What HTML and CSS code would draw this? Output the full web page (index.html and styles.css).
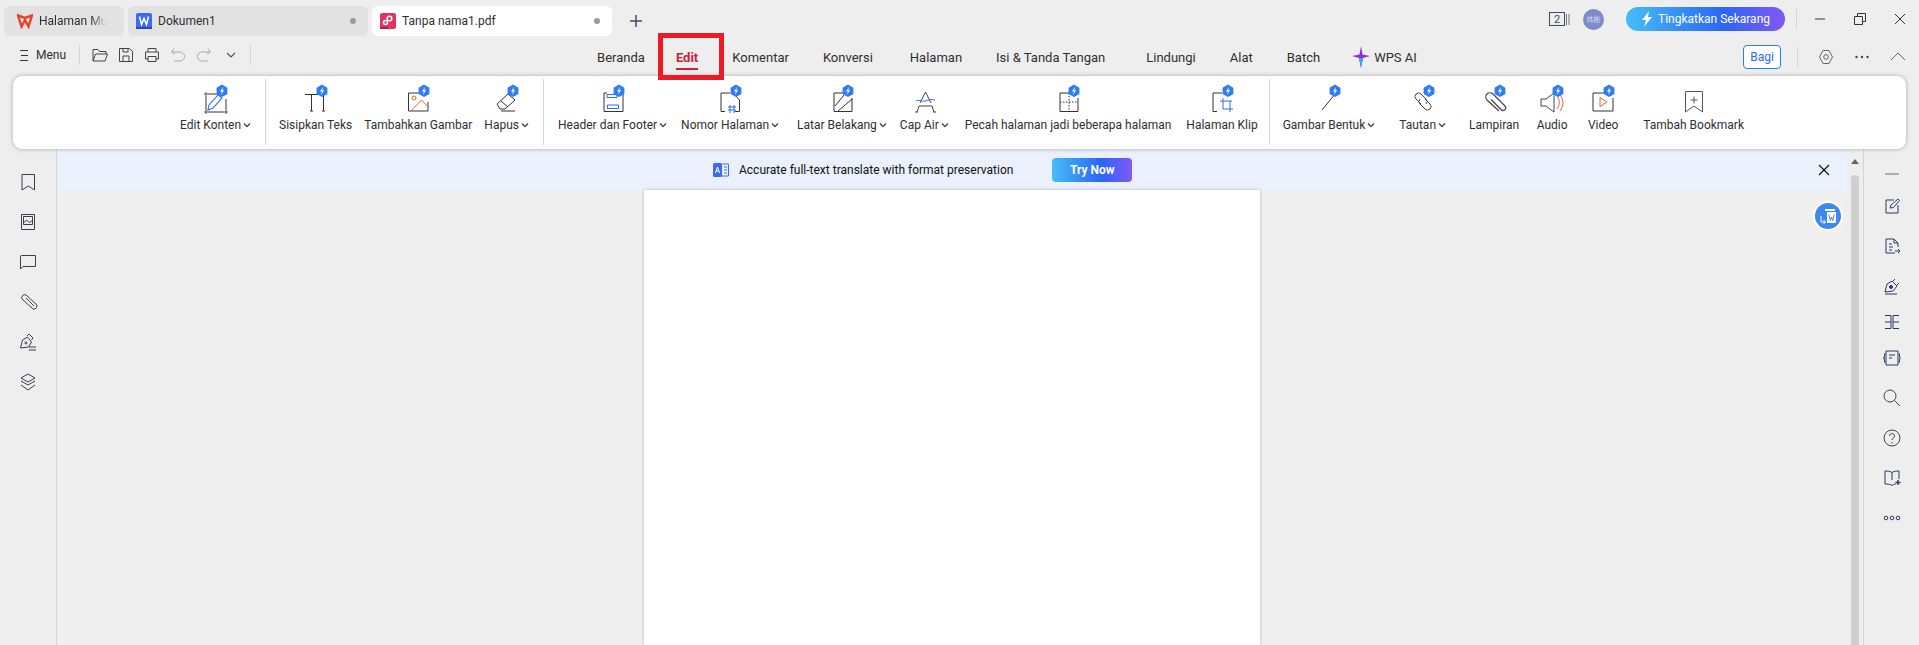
FILE: index.html
```html
<!DOCTYPE html>
<html lang="en">
<head>
    <meta charset="UTF-8">
    <meta name="viewport" content="width=device-width, initial-scale=1.0">
    <title>Tanpa nama1.pdf</title>
    <link rel="stylesheet" href="styles.css">
</head>
<body>
    <svg class="sprite" width="0" height="0">
        <symbol id="badge" viewBox="0 0 32 32">
            <path d="M22 .6l5.400 3.100v6.200L22 13l-5.400-3.100V3.700z" fill="#2f7bf6"/>
            <path d="M23.200 2.800l-3.200 4.600h2l-1.200 3.600 3.400-4.800h-2z" fill="#fff"/>
        </symbol>
        <symbol id="caret" viewBox="0 0 8 8">
            <path d="M1 2.500l3 3 3-3" fill="none" stroke="#444" stroke-width="1.300"/>
        </symbol>
    </svg>

    <!-- tabs row -->
    <div class="tabs-row">
        <div class="doc-tab">
            <svg class="tab-icon" viewBox="0 0 16 16"><path d="M1 2.500l3.500 11 3.500-6.500 3.500 6.500L15 2.500 8 5z" fill="none" stroke="#e8402a" stroke-width="2.400"/></svg>
            <span class="tab-name tab-name-fade">Halaman Mu</span>
        </div>
        <div class="doc-tab">
            <svg class="tab-icon" viewBox="0 0 16 16"><rect width="16" height="16" rx="2" fill="#3d6bf0"/><rect y="14" width="16" height="2" fill="#2a49b8"/><path d="M3.500 3.500l2 8 2.500-6 2.500 6 2-8" fill="none" stroke="#fff" stroke-width="1.500"/></svg>
            <span class="tab-name">Dokumen1</span>
            <span class="tab-dot"></span>
        </div>
        <div class="doc-tab doc-tab-active">
            <svg class="tab-icon" viewBox="0 0 16 16"><rect width="16" height="16" rx="2" fill="#e5345b"/><rect y="14" width="8" height="2" fill="#b31f42"/><circle cx="9.500" cy="5.500" r="2.300" fill="none" stroke="#fff" stroke-width="1.500"/><circle cx="5.500" cy="9.500" r="2" fill="none" stroke="#fff" stroke-width="1.500"/></svg>
            <span class="tab-name">Tanpa nama1.pdf</span>
            <span class="tab-dot"></span>
        </div>
        <svg class="new-tab" viewBox="0 0 12 12"><path d="M6 0v12M0 6h12" stroke="#3f4a66" stroke-width="1.500"/></svg>

        <div class="top-right">
            <svg class="count-icon" viewBox="0 0 21 14"><rect x=".5" y=".5" width="15" height="13" fill="none" stroke="#3f4a66"/><text x="8" y="11" class="count-num">2</text><path d="M17.500 2v11M20 2v11" stroke="#777"/></svg>
            <span class="avatar">炜彬</span>
            <button class="upgrade" type="button">
                <svg viewBox="0 0 12 16" width="12" height="16"><path d="M8 0L1 9h4l-2 7 8-10H7z" fill="#fff"/></svg>
                Tingkatkan Sekarang
            </button>
            <span class="vsep vsep-win"></span>
            <svg class="win-btn" viewBox="0 0 12 12"><path d="M1 6h10" stroke="#333"/></svg>
            <svg class="win-btn" viewBox="0 0 12 12"><path d="M.5 3.500h8v8h-8zM3.500 3.500v-3h8v8h-3" fill="none" stroke="#333"/></svg>
            <svg class="win-btn" viewBox="0 0 12 12"><path d="M1 1l10 10M11 1L1 11" stroke="#333"/></svg>
        </div>
    </div>

    <!-- menu and nav row -->
    <div class="menu-row">
        <div class="quick">
            <svg class="menu-lines" viewBox="0 0 9 11"><path d="M0 .5h8M1 5.500h7M0 10.500h8" stroke="#333"/></svg>
            <span class="menu-text">Menu</span>
            <span class="vsep"></span>
            <svg class="q-icon" viewBox="0 0 16 16"><path d="M1 14V2.500h5l1.500 2H14V7M1 14l2.500-7H15.500L13 14z" fill="none" stroke="#444"/></svg>
            <svg class="q-icon" viewBox="0 0 16 16"><path d="M1.500 1.500h10l3 3v10h-13zM5 14.500V9h6v5.500M5 1.500V5h5V1.500" fill="none" stroke="#444"/></svg>
            <svg class="q-icon" viewBox="0 0 16 16"><path d="M4 5V1.500h8V5M4 12H1.500V5h13v7H12M4 9.500h8v5H4z" fill="none" stroke="#444"/></svg>
            <svg class="q-icon q-off" viewBox="0 0 16 16"><path d="M4 1.500L1.500 5 5 7M2 5h8a4.500 4.500 0 0 1 0 9H4" fill="none" stroke="#aaa"/></svg>
            <svg class="q-icon q-off" viewBox="0 0 16 16"><path d="M12 1.500L14.500 5 11 7M14 5H6a4.500 4.500 0 0 0 0 9h6" fill="none" stroke="#aaa"/></svg>
            <svg class="q-more" viewBox="0 0 10 6"><path d="M1 1l4 4 4-4" fill="none" stroke="#555" stroke-width="1.200"/></svg>
            <span class="vsep"></span>
        </div>

        <nav class="nav-tabs">
            <span class="nav-tab nav-beranda">Beranda</span>
            <span class="nav-tab nav-tab-active">Edit<i class="mark-box"></i></span>
            <span class="nav-tab">Komentar</span>
            <span class="nav-tab">Konversi</span>
            <span class="nav-tab nav-halaman">Halaman</span>
            <span class="nav-tab nav-isi">Isi &amp; Tanda Tangan</span>
            <span class="nav-tab">Lindungi</span>
            <span class="nav-tab">Alat</span>
            <span class="nav-tab nav-batch">Batch</span>
            <span class="nav-tab nav-ai">
                <svg viewBox="0 0 18 24" width="18" height="24"><path d="M9 1l1.500 8.500L18 11l-7 2-2 10-2-10-7-2 7.500-1.500z" fill="#8a2be2"/><path d="M9 13l2 0-2 10-2-10z" fill="#33a6f5"/></svg>
                WPS AI
            </span>
        </nav>

        <div class="menu-right">
            <button class="share" type="button">Bagi</button>
            <span class="vsep"></span>
            <svg class="m-icon" viewBox="0 0 16 16"><path d="M5 1.500h6l3.500 6.500-3.500 6.500H5L1.500 8z" fill="none" stroke="#666"/><circle cx="8" cy="8" r="2.300" fill="none" stroke="#666"/></svg>
            <svg class="m-icon" viewBox="0 0 16 16"><circle cx="2.500" cy="8" r="1.200" fill="#444"/><circle cx="8" cy="8" r="1.200" fill="#444"/><circle cx="13.500" cy="8" r="1.200" fill="#444"/></svg>
            <svg class="m-icon" viewBox="0 0 16 16"><path d="M1 11l7-7 7 7" fill="none" stroke="#666"/></svg>
        </div>
    </div>

    <!-- ribbon -->
    <div class="ribbon">
        <div class="rb-item">
            <svg class="rb-icon" viewBox="0 0 32 32"><path d="M8 10h10M6 12v14M8 28h16M26 15v11" fill="none" stroke="#333"/><path d="M5 9h2v2H5zM5 27h2v2H5zM25 27h2v2h-2z" fill="none" stroke="#333" stroke-width=".8"/><path d="M8 26l1-5 9-10 4 3-9 10z" fill="none" stroke="#2f6cf0" stroke-width="1.100"/><use href="#badge"/></svg>
            <span class="rb-label">Edit Konten<svg class="caret"><use href="#caret"/></svg></span>
        </div>
        <span class="rb-sep"></span>
        <div class="rb-item rb-sisipkan">
            <svg class="rb-icon" viewBox="0 0 32 32"><path d="M5 10.500h21M11.500 10.500V27M23.500 10.500V27M10 27h3M22 27h3" fill="none" stroke="#333"/><use href="#badge"/></svg>
            <span class="rb-label">Sisipkan Teks</span>
        </div>
        <div class="rb-item rb-snug">
            <svg class="rb-icon" viewBox="0 0 32 32"><path d="M17 9H6.500v18H26V18" fill="none" stroke="#333"/><circle cx="12" cy="14" r="2" fill="none" stroke="#e2682a"/><path d="M9 27l10.500-11 6.500 7" fill="none" stroke="#e2682a"/><use href="#badge"/></svg>
            <span class="rb-label">Tambahkan Gambar</span>
        </div>
        <div class="rb-item">
            <svg class="rb-icon" viewBox="0 0 32 32"><path d="M6 20l11-10 7 6-10 9h-5zM10 17l7 6M10 27h14" fill="none" stroke="#333"/><use href="#badge"/></svg>
            <span class="rb-label">Hapus<svg class="caret"><use href="#caret"/></svg></span>
        </div>
        <span class="rb-sep"></span>
        <div class="rb-item rb-header">
            <svg class="rb-icon" viewBox="0 0 32 32"><path d="M22 9h4v18.500H7V9h3" fill="none" stroke="#333"/><path d="M10 10.500h10v3H10zM10.500 21h11v3.500h-11z" fill="none" stroke="#2f6cf0"/><use href="#badge"/></svg>
            <span class="rb-label">Header dan Footer<svg class="caret"><use href="#caret"/></svg></span>
        </div>
        <div class="rb-item rb-nomor">
            <svg class="rb-icon" viewBox="0 0 32 32"><path d="M16 9H7v18.500h4M21 27.500h4.500V16l-6-7" fill="none" stroke="#333"/><path d="M14 23h8M14 26h8M16 21v8M20 21v8" fill="none" stroke="#2f6cf0"/><use href="#badge"/></svg>
            <span class="rb-label">Nomor Halaman<svg class="caret"><use href="#caret"/></svg></span>
        </div>
        <div class="rb-item rb-latar">
            <svg class="rb-icon" viewBox="0 0 32 32"><path d="M18 9H8v18.500h18V14M9 22l9-11M12 27l14-12" fill="none" stroke="#333"/><use href="#badge"/></svg>
            <span class="rb-label">Latar Belakang<svg class="caret"><use href="#caret"/></svg></span>
        </div>
        <div class="rb-item">
            <svg class="rb-icon" viewBox="0 0 32 32"><path d="M17.500 8L12 19M17.500 8L23 19M9 28l2-6h13l2 6M10 28h-3M25 28h3" fill="none" stroke="#444"/><path d="M8 17c3-2 5 1 9 0s6-2 10-1" fill="none" stroke="#2f6cf0"/></svg>
            <span class="rb-label">Cap Air<svg class="caret"><use href="#caret"/></svg></span>
        </div>
        <div class="rb-item rb-pecah">
            <svg class="rb-icon" viewBox="0 0 32 32"><path d="M17 9H8v18.500h18V14" fill="none" stroke="#333"/><path d="M17 9v19M8 18h18" fill="none" stroke="#333" stroke-dasharray="1.500 1.500"/><use href="#badge"/></svg>
            <span class="rb-label">Pecah halaman jadi beberapa halaman</span>
        </div>
        <div class="rb-item rb-klip">
            <svg class="rb-icon" viewBox="0 0 32 32"><path d="M16 9H7v18.500h4" fill="none" stroke="#333"/><path d="M14 17h12M17 14v11h10M24 17v11" fill="none" stroke="#2f6cf0"/><use href="#badge"/></svg>
            <span class="rb-label">Halaman Klip</span>
        </div>
        <span class="rb-sep"></span>
        <div class="rb-item rb-bentuk">
            <svg class="rb-icon" viewBox="0 0 32 32"><path d="M9 26l13-16" stroke="#333"/><use href="#badge"/></svg>
            <span class="rb-label">Gambar Bentuk<svg class="caret"><use href="#caret"/></svg></span>
        </div>
        <div class="rb-item rb-tautan">
            <svg class="rb-icon" viewBox="0 0 32 32"><path d="M14 20l-5-5a3.500 3.500 0 0 1 5-5l5 5a3.500 3.500 0 0 1 0 5M18 15l5 5a3.500 3.500 0 0 1-5 5l-5-5a3.500 3.500 0 0 1 0-5" fill="none" stroke="#444"/><use href="#badge"/></svg>
            <span class="rb-label">Tautan<svg class="caret"><use href="#caret"/></svg></span>
        </div>
        <div class="rb-item rb-lampiran">
            <svg class="rb-icon" viewBox="0 0 32 32"><path d="M21 27L9 16a4 4 0 0 1 6-6l12 12a2.500 2.500 0 0 1-4 3.500l-10-10" fill="none" stroke="#444" stroke-width="1.200"/><use href="#badge"/></svg>
            <span class="rb-label">Lampiran</span>
        </div>
        <div class="rb-item">
            <svg class="rb-icon" viewBox="0 0 32 32"><path d="M5 15h5l8-6v19l-8-6H5z" fill="none" stroke="#444"/><path d="M21 12c3 4 3 9 0 13M24 11c4 5 4 11 0 16" fill="none" stroke="#e2682a"/><use href="#badge"/></svg>
            <span class="rb-label">Audio</span>
        </div>
        <div class="rb-item rb-video">
            <svg class="rb-icon" viewBox="0 0 32 32"><path d="M17 9H6v18h20V14" fill="none" stroke="#333"/><path d="M13 13.500l7 4.500-7 4.500z" fill="none" stroke="#e2682a"/><use href="#badge"/></svg>
            <span class="rb-label">Video</span>
        </div>
        <div class="rb-item rb-bookmark">
            <svg class="rb-icon" viewBox="0 0 32 32"><path d="M7.500 7.500h17V28l-8.500-6-8.500 6zM16 12.500v7M12.500 16h7" fill="none" stroke="#555"/></svg>
            <span class="rb-label">Tambah Bookmark</span>
        </div>
    </div>

    <!-- main area -->
    <div class="main">
        <aside class="rail">
            <svg class="rail-icon" viewBox="0 0 20 20"><path d="M4 2.500h12.500V18l-6.200-4L4 18z"/></svg>
            <svg class="rail-icon" viewBox="0 0 20 20"><path d="M3.500 2.500h13v15h-13z"/><path d="M5.500 4.500h9v8h-9zM5.500 11l3-3 3 2.500 3-2"/></svg>
            <svg class="rail-icon" viewBox="0 0 20 20"><path d="M2.500 4.500a1 1 0 0 1 1-1h14v11H5l-2.500 2.500z"/></svg>
            <svg class="rail-icon" viewBox="0 0 20 20"><path d="M15 17L4 7a3 3 0 0 1 4-4l10 9a3 3 0 0 1-3 5zM8 6l8 8"/></svg>
            <svg class="rail-icon" viewBox="0 0 20 20"><path d="M2.500 16l2-8 5-3 4 5-3 5zM9 4l2-2 4 4-1.500 2"/><circle cx="8" cy="11" r="1"/><path d="M11 15h7M11 18h7" stroke="#2b3a67"/></svg>
            <svg class="rail-icon" viewBox="0 0 20 20"><path d="M10 2l7 4-7 4-7-4zM3 9l7 4 7-4M3 13l7 5 7-5"/></svg>
        </aside>

        <div class="doc-area">
            <div class="banner">
                <svg class="banner-icon" viewBox="0 0 16 16"><rect x="0" y="1" width="9" height="14" rx="1.500" fill="#3d6bf0"/><path d="M2.500 11l2-6 2 6M3.300 9h2.400" fill="none" stroke="#fff"/><path d="M9 2h6.500v12H9M11 5h3M11 8h3M11 11h3" fill="none" stroke="#3d6bf0"/></svg>
                <span class="banner-text">Accurate full-text translate with format preservation</span>
                <button class="try-now" type="button">Try Now</button>
            </div>
            <svg class="banner-close" viewBox="0 0 12 12"><path d="M1 1l10 10M11 1L1 11" stroke="#111" stroke-width="1.200"/></svg>
            <span class="float-btn">
                <svg viewBox="0 0 18 18" width="18" height="18"><path d="M6 2h10v2H6z" fill="#fff"/><path d="M8 5h9v11H8z" fill="#fff"/><path d="M2 9v6h4M4.500 13l2 2-2 2" fill="none" stroke="#fff"/><path d="M9.800 7.500l1.500 6 1.200-3.500 1.200 3.500 1.500-6" fill="none" stroke="#3f86ee"/></svg>
            </span>
            <div class="page"></div>
        </div>

        <div class="scrollbar">
            <span class="scroll-up"></span>
            <span class="scroll-thumb"></span>
        </div>

        <aside class="rail-right">
            <svg class="rr-icon rr-first" viewBox="0 0 20 20"><path d="M3 10h14" stroke="#999" stroke-width="1.500"/></svg>
            <svg class="rr-icon rr-close" viewBox="0 0 20 20"><path d="M12 4H4v13h12V9M8 12l1-3 7-6 1.500 1.500-6 7z"/></svg>
            <svg class="rr-icon" viewBox="0 0 20 20"><path d="M12 3H4v14h9M12 3l4 4v4M12 3v4h4M7 8h3M7 11h4M7 14h3M13 15h5M16 13l2 2-2 2"/></svg>
            <svg class="rr-icon" viewBox="0 0 20 20"><path d="M3 16l2-8 5-3 5 5-4 5zM13 3l-2 2M17 7l-2 2M3 18h12"/><circle cx="9" cy="11" r="1.500" fill="#2b3a67"/></svg>
            <svg class="rr-icon rr-tight" viewBox="0 0 20 20"><path d="M3 3.500h6v13H3M3 10h6M17 3.500h-6v13h6M11 10h6"/></svg>
            <svg class="rr-icon rr-tight" viewBox="0 0 20 20"><path d="M4 3h12v14H4zM3 5l-1 5 1 5M17 5l1 5-1 5M7 7h6M7 10h3M1 10h1"/></svg>
            <svg class="rr-icon rr-plain" viewBox="0 0 20 20"><circle cx="8" cy="8" r="6"/><path d="M12.500 12.500L18 18"/></svg>
            <svg class="rr-icon rr-plain" viewBox="0 0 20 20"><circle cx="10" cy="10" r="8"/><path d="M7.500 8a2.500 2.500 0 1 1 3.500 2.300c-.8.400-1 1-1 1.700M10 14v1.500"/></svg>
            <svg class="rr-icon" viewBox="0 0 20 20"><path d="M10 4.500C8 3 5 3 3 3v13c2 0 5 0 7 1.500 2-1.500 3-1.500 4-1.500M10 4.500c2-1.500 5-1.500 7-1.500v8M10 4.500V12"/><path d="M16 12v5M13.500 14.500h5" stroke-width="1.500"/></svg>
            <svg class="rr-icon" viewBox="0 0 20 20"><circle cx="4" cy="10" r="1.800"/><circle cx="10" cy="10" r="1.800"/><circle cx="16" cy="10" r="1.800"/></svg>
        </aside>
    </div>
</body>
</html>
```

FILE: styles.css
```css
* {
    box-sizing: border-box;
}

html, body {
    height: 100%;
}

body {
    margin: 0;
    display: flex;
    flex-direction: column;
    overflow: hidden;
    background-color: #eeeeee;
    color: #2f2f2f;
    font-family: Roboto, "Noto Sans CJK SC", Arial, sans-serif;
    font-size: 12px;
}

button {
    font-family: inherit;
    border: none;
    cursor: pointer;
}

.sprite {
    position: absolute;
}

/* tabs row */
.tabs-row {
    display: flex;
    align-items: flex-start;
    height: 45px;
    padding: 6px 0 0 4px;
    flex-shrink: 0;
}

.doc-tab {
    display: flex;
    align-items: center;
    width: 240px;
    height: 30px;
    margin-right: 4px;
    padding: 0 12px 0 8px;
    background-color: #e2e2e2;
    border-radius: 6px;
}

.doc-tab:first-child {
    width: 120px;
    padding-left: 13px;
}

.doc-tab-active {
    background-color: #ffffff;
}

.tab-icon {
    width: 16px;
    height: 16px;
    flex-shrink: 0;
    margin-right: 6px;
}

.tab-name {
    flex: 1;
    white-space: nowrap;
}

.tab-name-fade {
    -webkit-mask-image: linear-gradient(to right, #000 75%, transparent 100%);
    mask-image: linear-gradient(to right, #000 75%, transparent 100%);
    flex: none;
}

.tab-dot {
    width: 6px;
    height: 6px;
    border-radius: 50%;
    background-color: #999;
}

.new-tab {
    width: 12px;
    height: 12px;
    margin: 9px 0 0 14px;
}

.top-right {
    display: flex;
    align-items: center;
    height: 26px;
    margin-left: auto;
    padding-right: 13px;
}

.count-icon {
    width: 21px;
    height: 14px;
    margin-right: 13px;
}

.count-num {
    font-size: 11px;
    text-anchor: middle;
    fill: #3f4a66;
}

.avatar {
    display: flex;
    align-items: center;
    justify-content: center;
    width: 21px;
    height: 21px;
    margin-right: 22px;
    border-radius: 50%;
    background-color: #7f8bc9;
    color: #d8dcf2;
    font-size: 7px;
}

.upgrade {
    display: flex;
    align-items: center;
    justify-content: center;
    gap: 5px;
    width: 159px;
    height: 24px;
    border-radius: 12px;
    background: linear-gradient(to right, #45bdf7, #2b66f6 62%, #8457f5);
    color: #ffffff;
    font-size: 12px;
}

.vsep {
    width: 1px;
    height: 20px;
    background-color: #d5d5d5;
    flex-shrink: 0;
}

.vsep-win {
    margin: 0 17px 0 11px;
}

.win-btn {
    width: 12px;
    height: 12px;
    margin-right: 28px;
}

.win-btn:last-child {
    margin-right: 0;
}

/* menu and nav row */
.menu-row {
    display: flex;
    align-items: flex-start;
    height: 31px;
    flex-shrink: 0;
}

.quick {
    display: flex;
    align-items: center;
    height: 20px;
    padding-left: 20px;
}

.menu-lines {
    width: 9px;
    height: 11px;
}

.menu-text {
    margin: 0 13px 0 7px;
}

.q-icon {
    width: 16px;
    height: 16px;
    margin-left: 10px;
}

.quick .vsep + .q-icon {
    margin-left: 12px;
}

.q-off {
    margin-left: 10px;
}

.q-more {
    width: 10px;
    height: 6px;
    margin: 0 14px 0 14px;
}

.nav-tabs {
    display: flex;
    align-items: center;
    height: 24px;
    margin-left: 329px;
    font-size: 13px;
}

.nav-tab {
    position: relative;
    display: flex;
    align-items: center;
    padding: 0 17px;
    white-space: nowrap;
}

.nav-beranda {
    padding-right: 14px;
}

.nav-halaman {
    padding-left: 20px;
}

.nav-isi {
    padding-right: 24px;
}

.nav-batch {
    padding-right: 15px;
}

.nav-tab-active {
    color: #c8233c;
    font-weight: 700;
}

.nav-tab-active::after {
    content: "";
    position: absolute;
    left: 17px;
    right: 17px;
    top: 18px;
    height: 2px;
    background-color: #c8233c;
}

/* the red box drawn over the screenshot */
.mark-box {
    position: absolute;
    top: -17px;
    left: -1px;
    width: 66px;
    height: 47px;
    border: 5px solid #ed1c24;
    z-index: 5;
}

.nav-ai {
    gap: 4px;
}

.menu-right {
    display: flex;
    align-items: center;
    height: 24px;
    margin-left: auto;
    padding-right: 13px;
}

.share {
    width: 38px;
    height: 24px;
    margin-right: 16px;
    background-color: #ffffff;
    border: 1px solid #2a7bf6;
    border-radius: 4px;
    color: #2a6cf0;
    font-size: 12px;
    padding: 0;
}

.m-icon {
    width: 16px;
    height: 16px;
    margin-left: 20px;
}

/* ribbon */
.ribbon {
    position: relative;
    z-index: 2;
    display: flex;
    align-items: flex-start;
    height: 73px;
    margin: 0 13px;
    padding: 3px 0 0 159px;
    flex-shrink: 0;
    background-color: #ffffff;
    border-radius: 9px;
    box-shadow: 0 0 4px rgba(0, 0, 0, 0.3);
}

.rb-item {
    display: flex;
    flex-direction: column;
    align-items: center;
    padding: 5px 8px 0;
    white-space: nowrap;
}

.rb-sisipkan {
    padding-left: 7px;
    padding-right: 4px;
}

.rb-snug {
    padding-right: 4px;
}

.rb-header {
    padding-right: 6px;
}

.rb-nomor {
    padding-right: 10px;
}

.rb-latar {
    padding-right: 5px;
}

.rb-pecah {
    padding-right: 7px;
}

.rb-klip {
    padding-right: 5px;
}

.rb-bentuk {
    padding-left: 7px;
    padding-right: 12px;
}

.rb-tautan {
    padding-left: 12px;
    padding-right: 12px;
}

.rb-lampiran {
    padding-left: 11px;
    padding-right: 9px;
}

.rb-video {
    padding-left: 11px;
}

.rb-bookmark {
    padding-left: 16px;
}

.rb-icon {
    width: 32px;
    height: 32px;
}

.rb-label {
    display: flex;
    align-items: center;
    height: 18px;
    line-height: 18px;
}

.caret {
    width: 8px;
    height: 8px;
    margin-left: 2px;
}

.rb-sep {
    width: 1px;
    height: 66px;
    background-color: #d8d8d8;
    flex-shrink: 0;
    margin: 0 6px;
}

/* main area */
.main {
    display: flex;
    flex: 1;
    min-height: 0;
}

.rail {
    display: flex;
    flex-direction: column;
    align-items: center;
    gap: 20px;
    width: 57px;
    padding: 23px 1px 0 0;
    flex-shrink: 0;
    border-right: 1px solid #d4d4d4;
}

.rail-icon {
    width: 20px;
    height: 20px;
    fill: none;
    stroke: #3c3f46;
}

.doc-area {
    position: relative;
    display: flex;
    flex-direction: column;
    align-items: center;
    flex: 1;
    min-width: 0;
    background-color: #efefef;
}

.banner {
    display: flex;
    align-items: center;
    width: 100%;
    height: 41px;
    padding-left: 656px;
    flex-shrink: 0;
    background-color: #eaf1fd;
}

.banner-icon {
    width: 16px;
    height: 16px;
    margin-right: 10px;
}

.banner-text {
    color: #111;
}

.try-now {
    width: 80px;
    height: 24px;
    margin-left: 39px;
    border-radius: 4px;
    background: linear-gradient(to right, #45bdf7, #2b66f6 62%, #8457f5);
    color: #ffffff;
    font-size: 12px;
    font-weight: 700;
}

.banner-close {
    position: absolute;
    top: 15px;
    right: 17px;
    width: 12px;
    height: 12px;
}

.float-btn {
    position: absolute;
    top: 52px;
    right: 4px;
    display: flex;
    align-items: center;
    justify-content: center;
    width: 30px;
    height: 30px;
    border-radius: 50%;
    background-color: #3f86ee;
    border: 2px solid #ffffff;
}

.page {
    flex: 1;
    width: 616px;
    background-color: #ffffff;
    box-shadow: 0 0 3px rgba(0, 0, 0, 0.25);
}

.scrollbar {
    display: flex;
    flex-direction: column;
    align-items: center;
    width: 16px;
    padding-top: 10px;
    flex-shrink: 0;
}

.scroll-up {
    width: 0;
    height: 0;
    border-left: 4px solid transparent;
    border-right: 4px solid transparent;
    border-bottom: 5px solid #666;
}

.scroll-thumb {
    flex: 1;
    width: 8px;
    margin-top: 11px;
    background-color: #cfcfcf;
    border-radius: 4px 4px 0 0;
}

.rail-right {
    display: flex;
    flex-direction: column;
    align-items: center;
    gap: 20px;
    width: 56px;
    padding-top: 15px;
    flex-shrink: 0;
    border-left: 1px solid #d4d4d4;
}

.rr-icon {
    width: 20px;
    height: 20px;
    flex-shrink: 0;
    fill: none;
    stroke: #2b3a67;
}

.rr-plain {
    stroke: #444;
}

.rr-close {
    margin-top: -8px;
}

.rr-tight {
    margin-top: -4px;
}
```
